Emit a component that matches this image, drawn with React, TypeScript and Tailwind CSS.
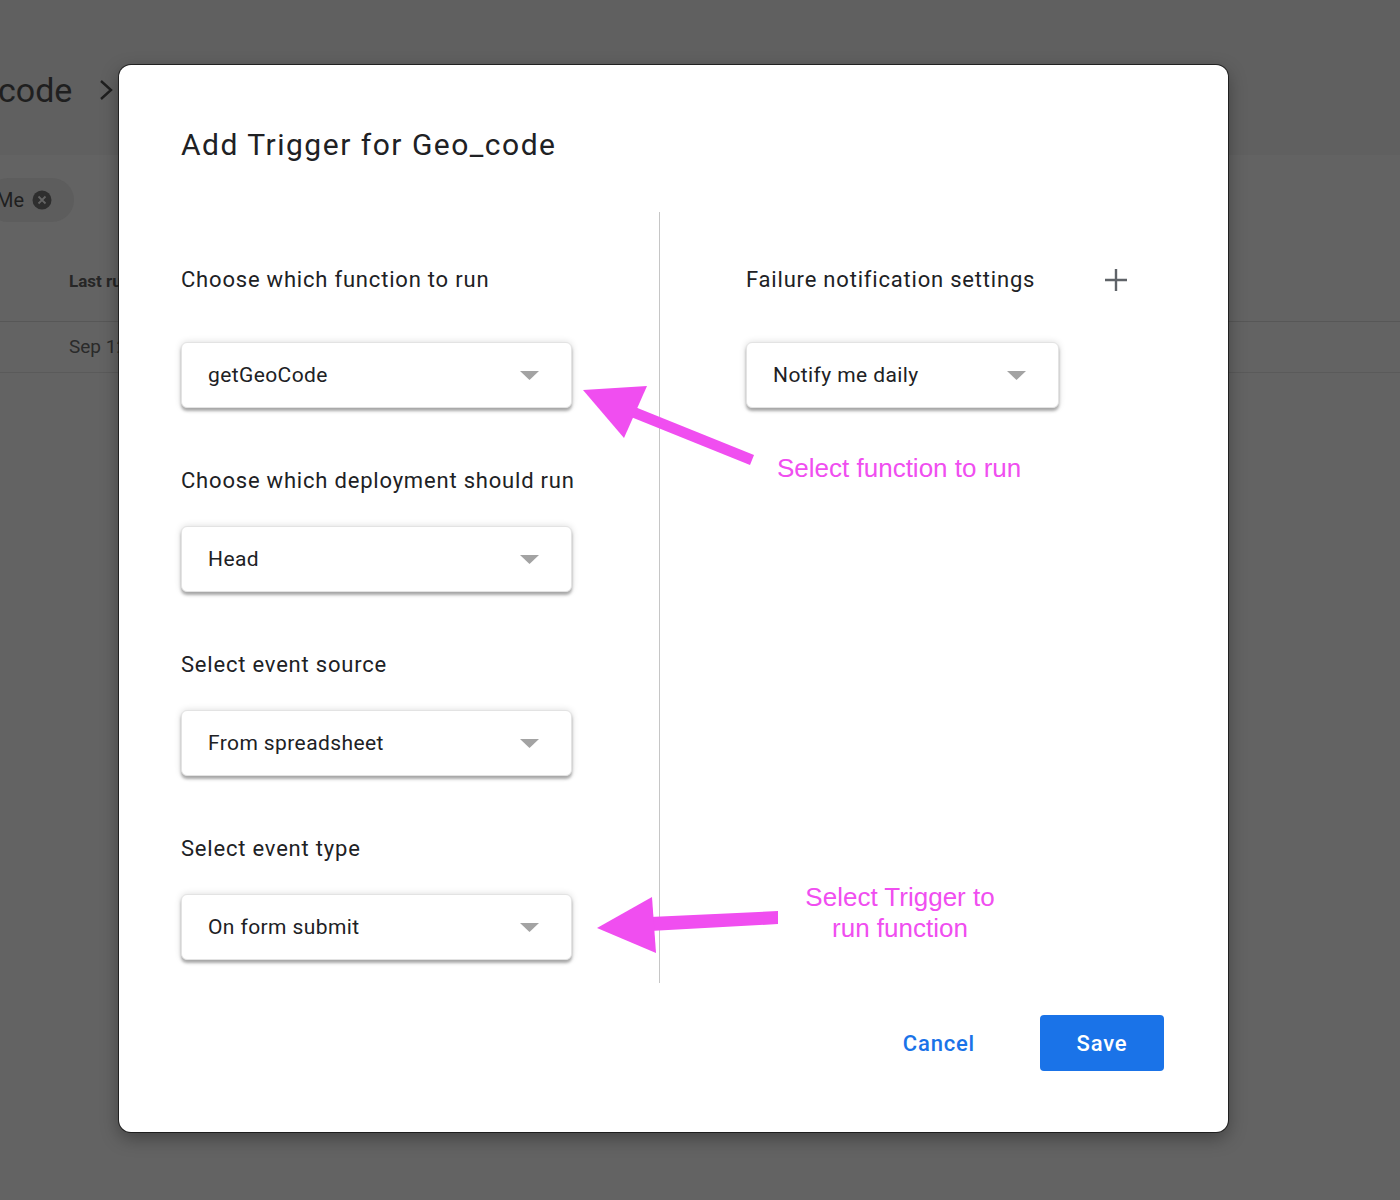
import React from 'react';

type SelectProps = { value: string; width: string };

function Select({ value, width }: SelectProps) {
  return (
    <div
      className={`${width} h-[66px] flex items-center justify-between pl-[26px] pr-[32px] rounded-[6px] bg-white border border-[#e3e3e3] shadow-[0_3px_3px_rgba(0,0,0,0.3),0_0_7px_rgba(0,0,0,0.14)]`}
    >
      <span className="text-[21px] leading-[28px] tracking-[0.4px] text-[#202124]">{value}</span>
      <svg width="19" height="9" viewBox="0 0 19 9">
        <polygon points="0,0 19,0 9.5,9" fill="#a3a3a3" />
      </svg>
    </div>
  );
}

function Label({ children }: { children: React.ReactNode }) {
  return (
    <div className="h-[28px] text-[22px] leading-[28px] tracking-[0.8px] text-[#202124] whitespace-nowrap">
      {children}
    </div>
  );
}

export default function App() {
  return (
    <div className="relative w-[1400px] h-[1200px] overflow-hidden bg-[#636363] font-['Roboto',sans-serif]">
      {/* Page behind the dialog */}
      <div className="h-[155px] bg-[#606060] pt-[68px]">
        <div className="flex items-center h-[44px] -ml-[2px] text-[#1f1f1f]">
          <span className="text-[34px] leading-[44px]">code</span>
          <svg className="ml-[27px]" width="14" height="22" viewBox="0 0 14 22">
            <path d="M2 2 L12 11 L2 20" fill="none" stroke="#1f1f1f" strokeWidth="2.4" />
          </svg>
        </div>
      </div>
      <div className="mt-[23px] flex">
        <div className="-ml-[14px] h-[44px] pl-[10px] pr-[22px] rounded-full bg-[#5d5d5d] flex items-center gap-[8px]">
          <span className="text-[20px] text-[#1f1f1f]">Me</span>
          <svg width="20" height="20" viewBox="0 0 20 20">
            <circle cx="10" cy="10" r="9.5" fill="#2e2e2e" />
            <path d="M6.5 6.5 L13.5 13.5 M13.5 6.5 L6.5 13.5" stroke="#636363" strokeWidth="1.8" />
          </svg>
        </div>
      </div>
      <div className="mt-[40px] h-[60px] pb-[20px] border-b border-[#575757] pl-[69px] flex items-center">
        <span className="text-[17px] font-bold text-[#262626]">Last run</span>
      </div>
      <div className="h-[51px] border-b border-[#5a5a5a] pl-[69px] flex items-center">
        <span className="text-[19px] text-[#2a2a2a]">Sep 12, 2021</span>
      </div>

      {/* Dialog */}
      <div className="absolute left-[119px] top-[65px] w-[1109px] h-[1067px] rounded-[12px] bg-white shadow-[0_0_0_1px_rgba(20,20,20,0.8),0_6px_18px_rgba(0,0,0,0.35)] pl-[62px] pr-[64px] pt-[62px] flex flex-col">
        <h1 className="h-[36px] text-[30px] leading-[36px] tracking-[1.5px] text-[#202124] whitespace-nowrap">
          Add Trigger for Geo_code
        </h1>

        <div className="mt-[49px] h-[771px] flex">
          <div className="w-[478px] pt-[54px] flex flex-col">
            <Label>Choose which function to run</Label>
            <div className="mt-[48px]">
              <Select value="getGeoCode" width="w-[391px]" />
            </div>
            <div className="mt-[59px]">
              <Label>Choose which deployment should run</Label>
            </div>
            <div className="mt-[31px]">
              <Select value="Head" width="w-[391px]" />
            </div>
            <div className="mt-[59px]">
              <Label>Select event source</Label>
            </div>
            <div className="mt-[31px]">
              <Select value="From spreadsheet" width="w-[391px]" />
            </div>
            <div className="mt-[59px]">
              <Label>Select event type</Label>
            </div>
            <div className="mt-[31px]">
              <Select value="On form submit" width="w-[391px]" />
            </div>
          </div>

          <div className="w-px bg-[#c6c6c6]" />

          <div className="pl-[86px] pt-[54px] flex flex-col">
            <div className="w-[381px] flex items-center justify-between">
              <Label>Failure notification settings</Label>
              <svg width="22" height="22" viewBox="0 0 22 22">
                <path d="M11 0 V22 M0 11 H22" stroke="#5f6368" strokeWidth="2.4" />
              </svg>
            </div>
            <div className="mt-[48px]">
              <Select value="Notify me daily" width="w-[313px]" />
            </div>
          </div>
        </div>

        <div className="mt-[32px] flex justify-end items-center gap-[65px]">
          <button className="text-[22px] tracking-[0.8px] font-medium text-[#1a73e8]">Cancel</button>
          <button className="w-[124px] h-[56px] rounded-[4px] bg-[#1a73e8] text-white text-[22px] tracking-[0.8px] font-medium">
            Save
          </button>
        </div>
      </div>

      {/* Annotations */}
      <svg className="absolute inset-0 pointer-events-none" width="1400" height="1200" viewBox="0 0 1400 1200">
        <polygon points="754,455 750,465 631,417 635,407" fill="#f04ef0" />
        <polygon points="583,390 647,386 624,438" fill="#f04ef0" />
        <polygon points="650,917 778,911 778,924 650,931" fill="#f04ef0" />
        <polygon points="597,928 652,897 656,953" fill="#f04ef0" />
      </svg>
      <div className="absolute left-[777px] top-[453px] text-[26px] leading-[30px] text-[#f04ef0] font-['Liberation_Sans',Arial,sans-serif]">
        Select function to run
      </div>
      <div className="absolute left-[780px] top-[882px] w-[240px] text-center text-[26px] leading-[31px] text-[#f04ef0] font-['Liberation_Sans',Arial,sans-serif]">
        Select Trigger to
        <br />
        run function
      </div>
    </div>
  );
}
